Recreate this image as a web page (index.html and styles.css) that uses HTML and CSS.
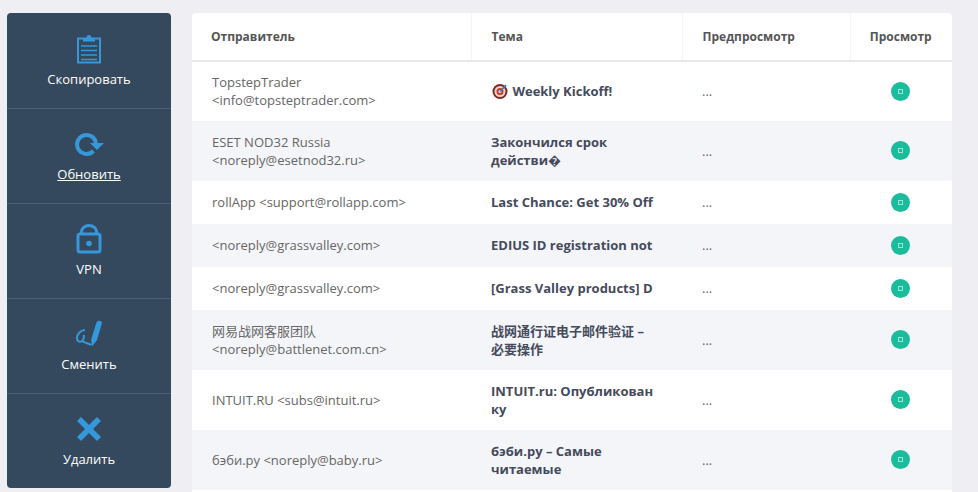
FILE: index.html
```html
<!DOCTYPE html>
<html lang="ru">
<head>
<meta charset="utf-8">
<title>Почта</title>
<link rel="stylesheet" href="styles.css">
</head>
<body>
<div class="page">
  <nav class="side">
    <a class="side-item">
      <svg class="ico" viewBox="0 0 26 30"><path class="ln" d="M7 4.500H2v24h22v-24H19"/><path class="fl" d="M7 7.500V3.500h3.500C10.800 1.800 11.600 1 13 1s2.200.8 2.500 2.500H19v4z"/><path class="ln thin" d="M5 12h16M5 16.500h16M5 21h16M5 25.500h16"/></svg>
      <span>Скопировать</span>
    </a>
    <a class="side-item">
      <svg class="ico" viewBox="0 0 30 30"><path class="ln bold" d="M19.500 22A9.500 9.500 0 1 1 22 14"/><path class="fl" d="M16 14h14l-7 7z"/></svg>
      <span class="under">Обновить</span>
    </a>
    <a class="side-item">
      <svg class="ico" viewBox="0 0 26 30"><path class="ln mid" d="M5.500 10V8a7.500 6.500 0 0 1 15 0v2"/><rect class="ln mid" x="2" y="10" width="22" height="18" rx="2"/><circle class="fl" cx="13" cy="19.500" r="2.800"/></svg>
      <span>VPN</span>
    </a>
    <a class="side-item">
      <svg class="ico" viewBox="0 0 28 30"><path class="ln" d="M10 11C6 11 2 15 2 19c0 4 4 5 6 2 1-2 1-4 1-5M7 22c3 2 6 2 9 4"/><path class="fl" d="M21.500 3.500c1-2.500 5-2.500 5.500.5L22 21l-4.500 6-1-.5-.2-6.500z"/></svg>
      <span>Сменить</span>
    </a>
    <a class="side-item">
      <svg class="ico" viewBox="0 0 30 30"><path class="fl" d="M7 3l8 8 8-8 4 4-8 8 8 8-4 4-8-8-8 8-4-4 8-8-8-8z"/></svg>
      <span>Удалить</span>
    </a>
  </nav>
  <main class="panel">
    <table class="mail">
      <colgroup><col class="c1"><col class="c2"><col class="c3"><col class="c4"></colgroup>
      <thead>
        <tr><th>Отправитель</th><th>Тема</th><th>Предпросмотр</th><th class="ctr">Просмотр</th></tr>
      </thead>
      <tbody>
        <tr class="tall up"><td>TopstepTrader &lt;info@topsteptrader.com&gt;</td><td class="subj"><svg class="target" viewBox="0 0 16 16"><circle cx="8" cy="8.500" r="7.500" fill="#7a2a22"/><circle cx="8" cy="8.500" r="5.500" fill="#e9d5c8"/><circle cx="8" cy="8.500" r="3.500" fill="#c9392c"/><circle cx="8" cy="8.500" r="1.500" fill="#eee"/><path d="M8 8.500 14 2" stroke="#2f7fc9" stroke-width="1.800"/></svg> Weekly Kickoff!</td><td class="dots">...</td><td class="ctr"><span class="dot"></span></td></tr>
        <tr class="tall alt"><td>ESET NOD32 Russia &lt;noreply@esetnod32.ru&gt;</td><td class="subj">Закончился срок действи�</td><td class="dots">...</td><td class="ctr"><span class="dot"></span></td></tr>
        <tr class="short up"><td>rollApp &lt;support@rollapp.com&gt;</td><td class="subj">Last Chance: Get 30% Off</td><td class="dots">...</td><td class="ctr"><span class="dot"></span></td></tr>
        <tr class="short alt up"><td>&lt;noreply@grassvalley.com&gt;</td><td class="subj">EDIUS ID registration not</td><td class="dots">...</td><td class="ctr"><span class="dot"></span></td></tr>
        <tr class="short up"><td>&lt;noreply@grassvalley.com&gt;</td><td class="subj">[Grass Valley products] D</td><td class="dots">...</td><td class="ctr"><span class="dot"></span></td></tr>
        <tr class="tall alt"><td>网易战网客服团队 &lt;noreply@battlenet.com.cn&gt;</td><td class="subj">战网通行证电子邮件验证 –<br>必要操作</td><td class="dots">...</td><td class="ctr"><span class="dot"></span></td></tr>
        <tr class="tall"><td>INTUIT.RU &lt;subs@intuit.ru&gt;</td><td class="subj">INTUIT.ru: Опубликован<br>ку</td><td class="dots">...</td><td class="ctr"><span class="dot"></span></td></tr>
        <tr class="tall alt"><td>бэби.ру &lt;noreply@baby.ru&gt;</td><td class="subj">бэби.ру – Самые читаемые</td><td class="dots">...</td><td class="ctr"><span class="dot"></span></td></tr>
        <tr class="short"><td></td><td></td><td></td><td></td></tr>
      </tbody>
    </table>
  </main>
</div>
</body>
</html>
```
FILE: styles.css
```css
html, body {
  margin: 0;
  height: 100%;
  overflow: hidden;
  background: #eeeef3;
}
body {
  font-family: "Open Sans", "Noto Sans CJK SC", sans-serif;
  font-size: 13px;
  line-height: 18px;
  color: #666;
}
.page {
  display: flex;
  align-items: flex-start;
  gap: 21px;
  padding: 13px 26px 0 7px;
}
.side {
  flex: 0 0 164px;
  display: flex;
  flex-direction: column;
  padding-top: 1px;
  background: #34495e;
  border-radius: 4px;
  overflow: hidden;
}
.side-item {
  height: 95px;
  box-sizing: border-box;
  display: flex;
  flex-direction: column;
  align-items: center;
  padding-top: 20px;
  border-bottom: 1px solid #4c6179;
  color: #fff;
}
.side-item:last-child {
  border-bottom: 0;
  height: 94px;
}
.side-item span {
  margin-top: 6px;
}
.side-item .under {
  text-decoration: underline;
}
.ico {
  height: 30px;
  width: 30px;
  display: block;
}
.ln {
  fill: none;
  stroke: #3498db;
  stroke-width: 2;
}
.thin { stroke-width: 1.500; }
.mid { stroke-width: 3; }
.bold { stroke-width: 4; }
.fl {
  fill: #3498db;
}
.panel {
  flex: 1;
  min-width: 0;
  background: #fff;
  border-radius: 4px 4px 0 0;
  overflow: hidden;
}
.mail {
  width: 760px;
  table-layout: fixed;
  border-collapse: collapse;
}
.c1 { width: 279px; }
.c2 { width: 211px; }
.c3 { width: 168px; }
.c4 { width: 102px; }
.mail th {
  height: 47px;
  padding: 0 0 0 20px;
  text-align: left;
  font-size: 12px;
  font-weight: 700;
  color: #555;
  border-bottom: 2px solid #e9e9ec;
  border-right: 1px solid #f4f4f6;
}
.mail th:first-child {
  padding-left: 19px;
}
.mail th:last-child {
  border-right: 0;
}
.mail th.ctr {
  padding: 0 1px 0 0;
  text-align: center;
}
.mail td {
  padding: 0 20px;
  vertical-align: middle;
}
.mail td.ctr {
  padding: 0 1px 2px 0;
  text-align: center;
}
.mail td.subj {
  font-weight: 700;
  color: #454a5c;
}
.mail .up td {
  padding-bottom: 2px;
}
.tall { height: 60px; }
.short { height: 43px; }
.alt { background: #f4f5f8; }
.target {
  width: 16px;
  height: 16px;
  vertical-align: -3px;
  margin-left: 1px;
  margin-right: 1px;
}
.dot {
  display: inline-block;
  position: relative;
  width: 19px;
  height: 19px;
  border-radius: 50%;
  background: #1abc9c;
  vertical-align: middle;
}
.dot::after {
  content: "";
  position: absolute;
  left: 7px;
  top: 7px;
  width: 3px;
  height: 3px;
  border: 1px solid #9fe6d6;
  box-sizing: content-box;
}
```
